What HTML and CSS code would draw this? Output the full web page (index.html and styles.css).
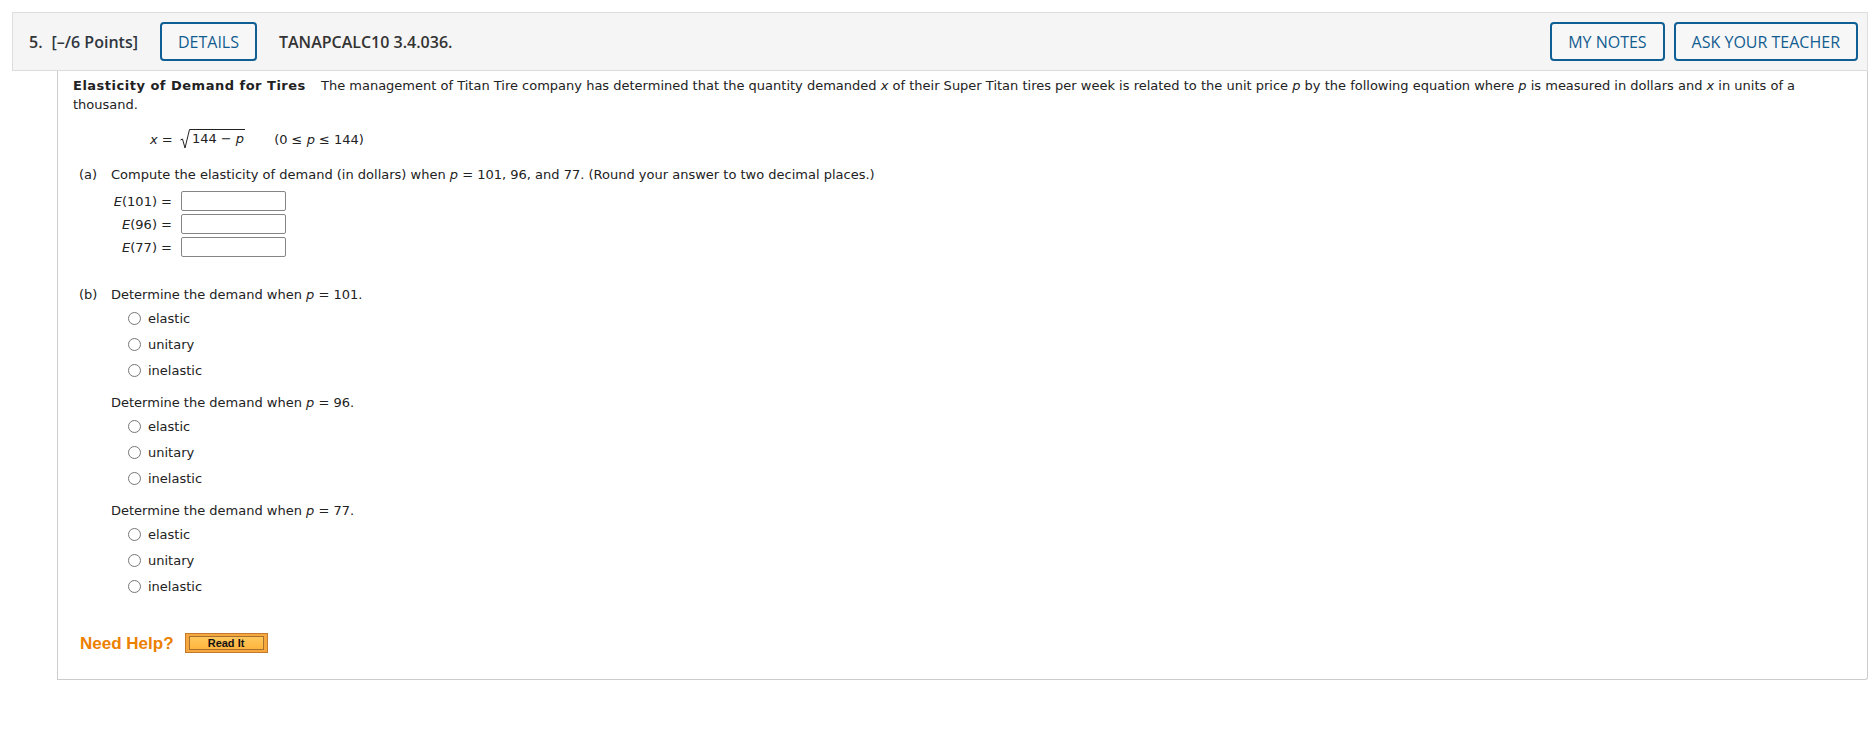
FILE: index.html
```html
<!DOCTYPE html>
<html lang="en">
<head>
<meta charset="utf-8">
<title>Question 5</title>
<link rel="stylesheet" href="styles.css">
</head>
<body>
<div class="page">
  <div class="qhead">
    <span class="qnum">5.</span>
    <span class="qpoints">[–/6 Points]</span>
    <button class="btn btn-details">DETAILS</button>
    <span class="qcode">TANAPCALC10 3.4.036.</span>
    <div class="qactions">
      <button class="btn">MY NOTES</button>
      <button class="btn">ASK YOUR TEACHER</button>
    </div>
  </div>
  <div class="qbody">
    <p class="intro"><b class="title">Elasticity of Demand for Tires</b> The management of Titan Tire company has determined that the quantity demanded <i>x</i> of their Super Titan tires per week is related to the unit price <i>p</i> by the following equation where <i>p</i> is measured in dollars and <i>x</i> in units of a<br>thousand.</p>
    <div class="equation">
      <span class="eq-lhs"><i>x</i> = </span>
      <span class="radical"><svg class="radical-sign" width="10" height="20" viewBox="0 0 10 20"><polyline points="0.5,11 2.5,10 5,19 9.5,0.5 10,0.5" fill="none" stroke="#222" stroke-width="1"/></svg><span class="radicand">144 − <i>p</i></span></span>
      <span class="eq-domain">(0 ≤ <i>p</i> ≤ 144)</span>
    </div>
    <div class="part">
      <div class="part-label">(a)</div>
      <div class="part-main">
        <div class="prompt">Compute the elasticity of demand (in dollars) when <i>p</i> = 101, 96, and 77. (Round your answer to two decimal places.)</div>
        <div class="answers">
          <span class="ans-label"><i>E</i>(101) =</span><input class="ans-input" type="text">
          <span class="ans-label"><i>E</i>(96) =</span><input class="ans-input" type="text">
          <span class="ans-label"><i>E</i>(77) =</span><input class="ans-input" type="text">
        </div>
      </div>
    </div>
    <div class="part part-b">
      <div class="part-label">(b)</div>
      <div class="part-main">
        <div class="prompt">Determine the demand when <i>p</i> = 101.</div>
        <div class="choices">
          <label class="choice"><input class="radio" type="radio" name="d1"><span>elastic</span></label>
          <label class="choice"><input class="radio" type="radio" name="d1"><span>unitary</span></label>
          <label class="choice"><input class="radio" type="radio" name="d1"><span>inelastic</span></label>
        </div>
        <div class="prompt sub">Determine the demand when <i>p</i> = 96.</div>
        <div class="choices">
          <label class="choice"><input class="radio" type="radio" name="d2"><span>elastic</span></label>
          <label class="choice"><input class="radio" type="radio" name="d2"><span>unitary</span></label>
          <label class="choice"><input class="radio" type="radio" name="d2"><span>inelastic</span></label>
        </div>
        <div class="prompt sub">Determine the demand when <i>p</i> = 77.</div>
        <div class="choices">
          <label class="choice"><input class="radio" type="radio" name="d3"><span>elastic</span></label>
          <label class="choice"><input class="radio" type="radio" name="d3"><span>unitary</span></label>
          <label class="choice"><input class="radio" type="radio" name="d3"><span>inelastic</span></label>
        </div>
      </div>
    </div>
    <div class="help">
      <span class="help-text">Need Help?</span>
      <span class="readit"><span class="readit-inner">Read It</span></span>
    </div>
  </div>
</div>
</body>
</html>
```
FILE: styles.css
```css
* { box-sizing: border-box; }
html, body { margin: 0; padding: 0; background: #ffffff; }
body {
  font-family: "DejaVu Sans", Verdana, sans-serif;
  font-size: 13px;
  line-height: 19px;
  color: #222222;
}
.page { padding: 12px 8px 0 12px; }

/* header */
.qhead {
  height: 59px;
  display: flex;
  align-items: center;
  padding: 0 9px 0 16px;
  background: #f5f5f5;
  border: 1px solid #dddddd;
  font-family: "Open Sans", "Liberation Sans", sans-serif;
  font-size: 16px;
  line-height: 22px;
  color: #333333;
}
.qnum { font-weight: 600; }
.qpoints { font-weight: 600; margin-left: 9px; color: #2f3640; }
.qcode { font-weight: 600; margin-left: 22px; color: #333333; }
.btn {
  height: 39px;
  padding: 0 16px;
  border: 2px solid #0f5f94;
  border-radius: 4px;
  background: #f7f7f7;
  color: #125d90;
  font-family: "Open Sans", "Liberation Sans", sans-serif;
  font-size: 16px;
  line-height: 22px;
}
.btn-details { margin-left: 22px; }
.qactions { margin-left: auto; display: flex; gap: 9px; }

/* body */
.qbody {
  margin-left: 45px;
  padding: 5px 16px 26px 15px;
  border: 1px solid #cccccc;
  border-top: none;
  border-bottom-right-radius: 3px;
}
.intro { margin: 0; white-space: nowrap; }
.title { margin-right: 11px; letter-spacing: 0.5px; }

.equation {
  margin-top: 13px;
  height: 24px;
  padding-left: 77px;
  display: flex;
  align-items: center;
}
.eq-lhs { white-space: pre; }
.radical { display: inline-flex; align-items: flex-start; margin-left: 3px; height: 20px; }
.radical-sign { display: block; }
.radicand {
  border-top: 1px solid #222222;
  padding: 0 1px 0 2px;
  line-height: 18px;
}
.eq-domain { margin-left: 29px; }

.part { display: flex; margin-left: 6px; margin-top: 14px; }
.part-b { margin-top: 28px; }
.part-label { width: 32px; flex: none; }
.part-main { flex: 1; }

.answers {
  margin-top: 7px;
  display: grid;
  grid-template-columns: 61px 105px;
  column-gap: 9px;
  row-gap: 3px;
  align-items: center;
}
.ans-label { text-align: right; white-space: nowrap; }
.ans-input {
  width: 105px;
  height: 20px;
  margin: 0;
  padding: 0 3px;
  border: 1px solid #858585;
  border-radius: 2px;
  background: #ffffff;
  font: inherit;
}

.choices { margin-top: 1px; padding-left: 17px; }
.choice { display: flex; align-items: center; height: 26px; }
.radio {
  appearance: none;
  -webkit-appearance: none;
  width: 13px;
  height: 13px;
  margin: 0 7px 0 0;
  border: 1px solid #767676;
  border-radius: 50%;
  background: #ffffff;
}
.prompt.sub { margin-top: 10px; }

/* help */
.help {
  margin-top: 34px;
  margin-left: 7px;
  height: 20px;
  display: flex;
  align-items: center;
}
.help-text {
  font-family: "Liberation Sans", Arial, sans-serif;
  font-weight: bold;
  font-size: 17px;
  color: #ec8000;
}
.readit {
  margin-left: 11px;
  width: 83px;
  height: 20px;
  padding: 2px 3px;
  border: 1px solid #c27a2e;
  background: #f6a83e;
  display: flex;
}
.readit-inner {
  flex: 1;
  border: 1px solid #a8702f;
  background: linear-gradient(#ffc75c, #ffb53e);
  font-family: "Liberation Sans", Arial, sans-serif;
  font-weight: bold;
  font-size: 11px;
  line-height: 12px;
  color: #111111;
  text-align: center;
}
```
